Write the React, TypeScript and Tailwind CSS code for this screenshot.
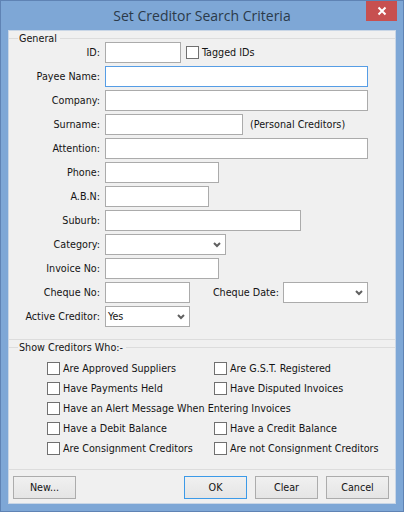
import React from "react";

const font = "font-['DejaVu_Sans_Condensed','DejaVu_Sans',sans-serif] [font-stretch:condensed]";
const txt = "text-[10.7px] text-[#141414]";

function Field({ w, active }: { w: string; active?: boolean }) {
  return (
    <div className={`${w} h-[21px] bg-white border ${active ? "border-[#569de5]" : "border-[#ababab]"}`} />
  );
}

function Combo({ w, value }: { w: string; value?: string }) {
  return (
    <div className={`${w} h-[21px] bg-white border border-[#ababab] flex items-center justify-between pl-[2px] pr-[4px]`}>
      <span className={`pt-px ${txt}`}>{value}</span>
      <svg width="8" height="6" viewBox="0 0 8 6" className="shrink-0">
        <path d="M1 1 L4 4 L7 1" fill="none" stroke="#606060" strokeWidth="2" />
      </svg>
    </div>
  );
}

function Row({ label, children }: { label: string; children: React.ReactNode }) {
  return (
    <div className="flex items-center h-[21px]">
      <span className={`w-[92px] pt-[2px] text-right pr-px whitespace-nowrap ${txt}`}>{label}</span>
      <div className="ml-[4px] flex items-center">{children}</div>
    </div>
  );
}

function Check({ label, w }: { label: string; w?: string }) {
  return (
    <div className={`flex items-center h-[13px] ${w ?? ""}`}>
      <div className="w-[13px] h-[13px] bg-white border border-[#707070] shrink-0" />
      <span className={`ml-[3px] pt-[2px] whitespace-nowrap ${txt}`}>{label}</span>
    </div>
  );
}

function Btn({ label, active }: { label: string; active?: boolean }) {
  return (
    <div
      className={`w-[63px] h-[23px] flex items-center justify-center pt-[2px] border bg-gradient-to-b from-[#f0f0f0] to-[#e5e5e5] ${txt} ${
        active ? "border-[#3c9ae8]" : "border-[#acacac]"
      }`}
    >
      {label}
    </div>
  );
}

export default function App() {
  return (
    <div className={`${font} relative w-[404px] h-[512px] bg-[#7ea7d6] border border-[#5f83b4] flex flex-col overflow-hidden`}>
      <div className="h-[29px] shrink-0 flex items-center justify-center text-[#2b3a4a] font-['Open_Sans',sans-serif] [font-stretch:normal]">
        <span className="text-[14px]">Set Creditor Search Criteria</span>
      </div>
      <div className="absolute top-0 right-[6px] w-[31px] h-[20px] bg-[#c75050] flex items-center justify-center">
        <svg width="10" height="10" viewBox="0 0 10 10">
          <path d="M1.5 1.5 L8.5 8.5 M8.5 1.5 L1.5 8.5" stroke="#fff" strokeWidth="2" />
        </svg>
      </div>

      <div className="mx-[7px] mb-[7px] flex-1 bg-[#f0f0f0] border border-[#c9d6e6] flex flex-col min-h-0">
        <div className="flex items-center h-[13px] mt-px">
          <div className="w-[9px] h-px bg-[#dcdcdc]" />
          <span className={`px-px leading-[13px] ${txt}`}>General</span>
          <div className="flex-1 h-px bg-[#dcdcdc] ml-[2px]" />
        </div>

        <div className="flex flex-col gap-[3px] mt-[-3px]">
          <Row label="ID:">
            <Field w="w-[76px]" />
            <div className="ml-[5px]"><Check label="Tagged IDs" /></div>
          </Row>
          <Row label="Payee Name:"><Field w="w-[263px]" active /></Row>
          <Row label="Company:"><Field w="w-[263px]" /></Row>
          <Row label="Surname:">
            <Field w="w-[138px]" />
            <span className={`ml-[7px] pt-[2px] whitespace-nowrap ${txt}`}>(Personal Creditors)</span>
          </Row>
          <Row label="Attention:"><Field w="w-[263px]" /></Row>
          <Row label="Phone:"><Field w="w-[114px]" /></Row>
          <Row label="A.B.N:"><Field w="w-[104px]" /></Row>
          <Row label="Suburb:"><Field w="w-[196px]" /></Row>
          <Row label="Category:"><Combo w="w-[121px]" /></Row>
          <Row label="Invoice No:"><Field w="w-[114px]" /></Row>
          <Row label="Cheque No:">
            <Field w="w-[85px]" />
            <span className={`w-[93px] pt-[2px] text-right pr-[4px] whitespace-nowrap ${txt}`}>Cheque Date:</span>
            <Combo w="w-[85px]" />
          </Row>
          <Row label="Active Creditor:"><Combo w="w-[85px]" value="Yes" /></Row>
        </div>

        <div className="h-px bg-[#dcdcdc] mt-[12px]" />
        <div className="flex items-center h-[13px] mt-[1px]">
          <div className="w-[9px] h-px bg-[#dcdcdc]" />
          <span className={`px-px leading-[13px] ${txt}`}>Show Creditors Who:-</span>
          <div className="flex-1 h-px bg-[#dcdcdc] ml-[2px]" />
        </div>

        <div className="mt-[8px] ml-[38px] flex flex-col gap-[7px]">
          <div className="flex"><Check w="w-[167px]" label="Are Approved Suppliers" /><Check label="Are G.S.T. Registered" /></div>
          <div className="flex"><Check w="w-[167px]" label="Have Payments Held" /><Check label="Have Disputed Invoices" /></div>
          <Check label="Have an Alert Message When Entering Invoices" />
          <div className="flex"><Check w="w-[167px]" label="Have a Debit Balance" /><Check label="Have a Credit Balance" /></div>
          <div className="flex"><Check w="w-[167px]" label="Are Consignment Creditors" /><Check label="Are not Consignment Creditors" /></div>
        </div>

        <div className="h-px bg-[#dcdcdc] mt-[14px]" />
        <div className="flex items-center mt-[6px] pl-[4px] pr-[6px]">
          <Btn label="New..." />
          <div className="flex-1" />
          <div className="flex gap-[8px]">
            <Btn label="OK" active />
            <Btn label="Clear" />
            <Btn label="Cancel" />
          </div>
        </div>
      </div>
    </div>
  );
}
